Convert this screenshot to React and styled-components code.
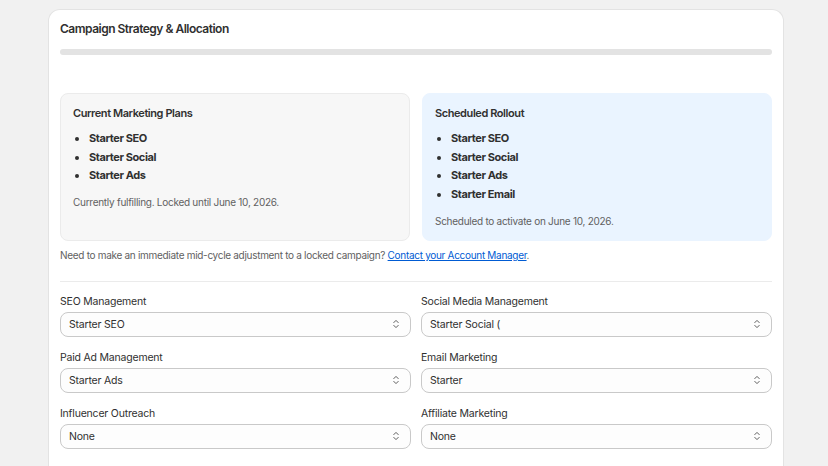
import React from "react";
import styled, { createGlobalStyle } from "styled-components";

const Global = createGlobalStyle`
  html, body { margin: 0; padding: 0; background: #f1f1f1; }
  body { font-family: Inter, "Noto Sans", sans-serif; color: #303030; -webkit-font-smoothing: antialiased; }
  * { box-sizing: border-box; }
`;

const Page = styled.div`
  padding: 9px 44px 0 48px;
`;

const Card = styled.section`
  background: #ffffff;
  border: 1px solid #e3e3e3;
  border-bottom: none;
  border-radius: 12px 12px 0 0;
  padding: 10px 11px 20px 11px;
  box-shadow: 0 1px 0 rgba(0,0,0,0.03);
`;

const Title = styled.h2`
  margin: 0;
  font-size: 12px;
  line-height: 18px;
  font-weight: 600;
  letter-spacing: -0.5px;
  color: #303030;
`;

const Bar = styled.div`
  height: 6px;
  border-radius: 3px;
  background: #e3e3e3;
  margin: 11px 0 38px;
`;

const Boxes = styled.div`
  display: grid;
  grid-template-columns: 1fr 1fr;
  gap: 12px;
`;

const Box = styled.div`
  border-radius: 8px;
  padding: 11px 12px 11px;
  background: ${p => (p.$tone === "blue" ? "#eaf4ff" : "#f7f7f7")};
  border: 1px solid ${p => (p.$tone === "blue" ? "#eaf4ff" : "#ebebeb")};
  display: flex;
  flex-direction: column;
`;

const BoxTitle = styled.h3`
  margin: 0;
  font-size: 11px;
  line-height: 16px;
  font-weight: 600;
  letter-spacing: -0.42px;
  color: #303030;
`;

const List = styled.ul`
  margin: 8px 0 9px;
  padding-left: 16px;
`;

const Item = styled.li`
  font-size: 11px;
  line-height: 18.7px;
  font-weight: 650;
  letter-spacing: -0.4px;
  color: #303030;
`;

const Note = styled.p`
  margin: 0;
  font-size: 10px;
  line-height: 16px;
  letter-spacing: -0.27px;
  color: #616161;
`;

const Help = styled.p`
  margin: 6px 0 0;
  font-size: 10px;
  line-height: 16px;
  letter-spacing: -0.3px;
  color: #616161;
`;

const Link = styled.a`
  color: #005bd3;
  text-decoration: underline;
  cursor: pointer;
`;

const Divider = styled.hr`
  border: none;
  border-top: 1px solid #ebebeb;
  margin: 18px 0 12px;
`;

const Fields = styled.div`
  display: grid;
  grid-template-columns: 1fr 1fr;
  column-gap: 10px;
  row-gap: 13px;
`;

const Field = styled.label`
  display: flex;
  flex-direction: column;
  gap: 2px;
`;

const Label = styled.span`
  font-size: 10.5px;
  line-height: 16px;
  letter-spacing: -0.2px;
  color: #303030;
`;

const SelectBox = styled.div`
  height: 25px;
  border: 1px solid #c9c9c9;
  border-radius: 8px;
  background: #fdfdfd;
  display: flex;
  align-items: center;
  justify-content: space-between;
  padding: 0 10px 0 8px;
  font-size: 10.5px;
  letter-spacing: -0.2px;
  color: #303030;
`;

const Chevrons = () => (
  <svg width="8" height="12" viewBox="0 0 8 12" fill="none" stroke="#5c5c5c" strokeWidth="1" strokeLinecap="round" strokeLinejoin="round">
    <path d="M1.8 4.6 L4 2.4 L6.2 4.6" />
    <path d="M1.8 7.4 L4 9.6 L6.2 7.4" />
  </svg>
);

const Select = ({ label, value }) => (
  <Field>
    <Label>{label}</Label>
    <SelectBox>
      <span>{value}</span>
      <Chevrons />
    </SelectBox>
  </Field>
);

const current = ["Starter SEO", "Starter Social", "Starter Ads"];
const scheduled = ["Starter SEO", "Starter Social", "Starter Ads", "Starter Email"];

const fields = [
  ["SEO Management", "Starter SEO"],
  ["Social Media Management", "Starter Social ("],
  ["Paid Ad Management", "Starter Ads"],
  ["Email Marketing", "Starter"],
  ["Influencer Outreach", "None"],
  ["Affiliate Marketing", "None"],
];

export default function App() {
  return (
    <>
      <Global />
      <Page>
        <Card>
          <Title>Campaign Strategy &amp; Allocation</Title>
          <Bar />
          <Boxes>
            <Box>
              <BoxTitle>Current Marketing Plans</BoxTitle>
              <List>
                {current.map(i => <Item key={i}>{i}</Item>)}
              </List>
              <Note>Currently fulfilling. Locked until June 10, 2026.</Note>
            </Box>
            <Box $tone="blue">
              <BoxTitle>Scheduled Rollout</BoxTitle>
              <List>
                {scheduled.map(i => <Item key={i}>{i}</Item>)}
              </List>
              <Note>Scheduled to activate on June 10, 2026.</Note>
            </Box>
          </Boxes>
          <Help>
            Need to make an immediate mid-cycle adjustment to a locked campaign?{" "}
            <Link>Contact your Account Manager</Link>.
          </Help>
          <Divider />
          <Fields>
            {fields.map(([l, v]) => <Select key={l} label={l} value={v} />)}
          </Fields>
        </Card>
      </Page>
    </>
  );
}
